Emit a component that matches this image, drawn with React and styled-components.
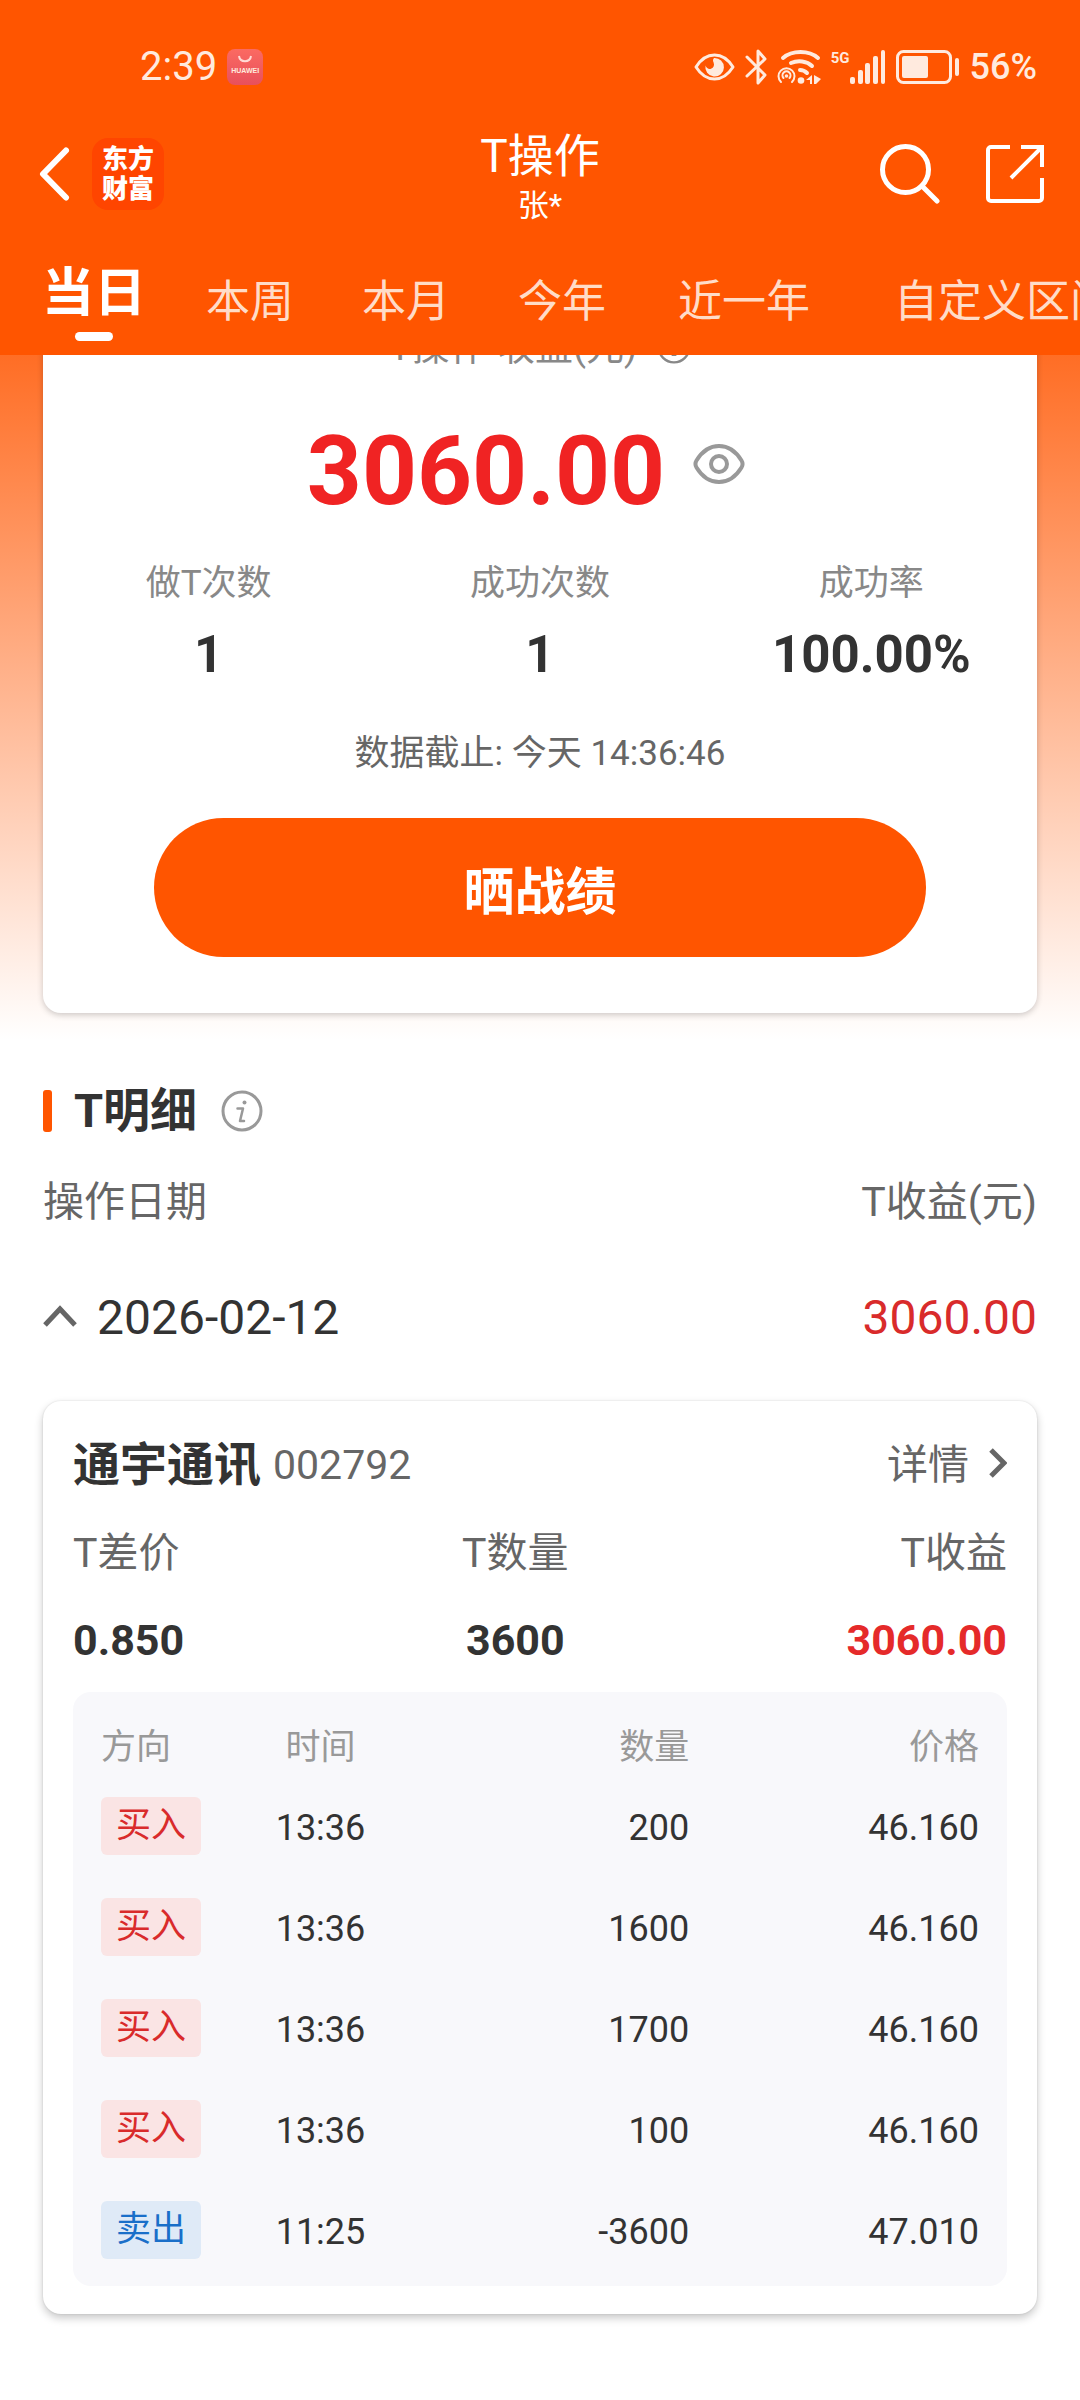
import { useState } from "react";
import styled, { createGlobalStyle } from "styled-components";

const TABS = ["当日", "本周", "本月", "今年", "近一年", "自定义区间"];

const STATS = [
  { label: "做T次数", value: "1" },
  { label: "成功次数", value: "1" },
  { label: "成功率", value: "100.00%" },
];

const TRADES = [
  { id: 1, side: "buy", time: "13:36", amount: "200", price: "46.160" },
  { id: 2, side: "buy", time: "13:36", amount: "1600", price: "46.160" },
  { id: 3, side: "buy", time: "13:36", amount: "1700", price: "46.160" },
  { id: 4, side: "buy", time: "13:36", amount: "100", price: "46.160" },
  { id: 5, side: "sell", time: "11:25", amount: "-3600", price: "47.010" },
];

// ICONS
const EyeComfortIcon = () => (
  <svg width="41" height="28" viewBox="0 0 41 28" fill="none">
    <path
      d="M2 14C7 6 13 2 20.500 2S34 6 39 14C34 22 28 26 20.500 26S7 22 2 14Z"
      stroke="currentColor"
      strokeWidth="3"
      strokeLinejoin="round"
    />
    <path
      d="M20 5a9.300 9.300 0 1 1-8.500 7.500c1 3 3.500 4 5.500 3.200 2.800-1 3.600-3.600 2.600-6.200C19 8 18.500 6.500 20 5Z"
      fill="currentColor"
    />
  </svg>
);

const BluetoothIcon = () => (
  <svg width="22" height="38" viewBox="1 0 22 38" fill="none">
    <path
      d="M3 9l18 18-7 8V3l7 8L3 28"
      stroke="currentColor"
      strokeWidth="3"
      strokeLinecap="round"
      strokeLinejoin="round"
    />
  </svg>
);

const WifiIcon = () => (
  <svg width="44" height="34" viewBox="0 0 44 34" fill="none">
    <g stroke="currentColor" strokeLinecap="round">
      <path d="M6 8C15 0 32 0 41 8" strokeWidth="4" />
      <path d="M14 13c7-3 16-2 21 3" strokeWidth="4" />
      <path d="M23 20c3 0 5 1 7 3" strokeWidth="4" />
      <path d="M4 32a8 8 0 1 1 11 0" strokeWidth="2" />
      <path d="M6.500 28a4 4 0 1 1 6 0" strokeWidth="2" />
    </g>
    <circle cx="9.500" cy="26" r="1.800" fill="currentColor" />
    <circle cx="24" cy="30.500" r="3.300" fill="currentColor" />
    <path d="M29 30l6-5v9h-2v-4zM37 25l7 4-5 5h-2z" fill="currentColor" />
  </svg>
);

const SignalIcon = () => (
  <svg width="36" height="34" viewBox="0 0 36 34" fill="currentColor">
    <rect x="0" y="27" width="5" height="7" rx="2" />
    <rect x="8" y="20" width="5" height="14" rx="2" />
    <rect x="15" y="13" width="5" height="21" rx="2" />
    <rect x="23" y="6" width="5" height="28" rx="2" />
    <rect x="31" y="0" width="4" height="34" rx="2" />
  </svg>
);

const BatteryIcon = () => (
  <svg width="64" height="34" viewBox="0 0 64 34" fill="none">
    <rect x="1.500" y="1.500" width="53" height="31" rx="6" stroke="currentColor" strokeWidth="3" />
    <rect x="6" y="6" width="26" height="22" rx="2" fill="currentColor" />
    <rect x="59" y="8" width="4" height="18" rx="2" fill="currentColor" />
  </svg>
);

const BackIcon = () => (
  <svg width="34" height="54" viewBox="0 0 34 54" fill="none">
    <path
      d="M30 3.500L7 27l23 23.500"
      stroke="currentColor"
      strokeWidth="6"
      strokeLinecap="round"
      strokeLinejoin="round"
    />
  </svg>
);

const SearchIcon = () => (
  <svg width="60" height="60" viewBox="0 0 60 60" fill="none" stroke="currentColor" strokeWidth="5">
    <circle cx="25.500" cy="25.500" r="23" />
    <path d="M42 42l15 15" strokeLinecap="round" />
  </svg>
);

const ShareIcon = () => (
  <svg width="58" height="58" viewBox="0 0 58 58" fill="none" stroke="currentColor" strokeWidth="4">
    <path d="M24 2H5a3 3 0 0 0-3 3v48a3 3 0 0 0 3 3h48a3 3 0 0 0 3-3V33" />
    <path d="M35 2h21v20M56 2L25 33" />
  </svg>
);

const EyeIcon = () => (
  <svg width="52" height="40" viewBox="0 0 52 40" fill="none" stroke="currentColor" strokeWidth="4">
    <path
      d="M3.500 16.500C9 7.500 17 2 26 2s17 5.500 22.500 14.500c1.500 2.500 1.500 4.500 0 7C43 32.500 35 38 26 38S9 32.500 3.500 23.500c-1.500-2.500-1.500-4.500 0-7Z"
      strokeLinejoin="round"
    />
    <circle cx="26" cy="20" r="8" />
  </svg>
);

const InfoIcon = ({ size = 42 }) => (
  <svg width={size} height={size} viewBox="0 0 42 42" fill="none" stroke="currentColor">
    <circle cx="21" cy="21" r="19" strokeWidth="3" />
    <path
      d="M16.500 18.500h5.500l-3 12.500h4"
      strokeWidth="2.500"
      strokeLinecap="round"
      strokeLinejoin="round"
    />
    <circle cx="23.500" cy="12.500" r="2" fill="currentColor" stroke="none" />
  </svg>
);

const CaretIcon = () => (
  <svg width="34" height="26" viewBox="0 0 34 26" fill="none">
    <path d="M2 20L17 4l15 16" stroke="#666" strokeWidth="5" />
  </svg>
);

const ChevronRightIcon = () => (
  <svg width="18" height="34" viewBox="0 0 18 34" fill="none">
    <path d="M2 2l13 13L2 28" stroke="#666" strokeWidth="5" />
  </svg>
);

const App = () => {
  const [activeTab, setActiveTab] = useState(TABS[0]);
  const [open, setOpen] = useState(true);

  return (
    <Page>
      <GlobalStyle />
      <Header>
        <StatusBar>
          <Clock>2:39</Clock>
          <StoreBadge>
            <svg width="14" height="8" viewBox="0 0 14 8" fill="none">
              <path d="M1 1c1 7 11 7 12 0" stroke="#ffd9d4" strokeWidth="2" />
            </svg>
            HUAWEI
          </StoreBadge>
          <StatusIcons>
            <EyeComfortIcon />
            <BluetoothIcon />
            <WifiIcon />
            <Signal>
              <NetworkType>5G</NetworkType>
              <SignalIcon />
            </Signal>
            <BatteryIcon />
            <Percent>56%</Percent>
          </StatusIcons>
        </StatusBar>

        <NavBar>
          <NavSide>
            <IconButton aria-label="返回">
              <BackIcon />
            </IconButton>
            <Logo>
              <span>东方</span>
              <span>财富</span>
            </Logo>
          </NavSide>
          <TitleBlock>
            <Title>T操作</Title>
            <Account>张*</Account>
          </TitleBlock>
          <NavActions>
            <IconButton aria-label="搜索">
              <SearchIcon />
            </IconButton>
            <IconButton aria-label="分享">
              <ShareIcon />
            </IconButton>
          </NavActions>
        </NavBar>

        <TabList>
          {TABS.map((tab) => (
            <Tab
              key={tab}
              data-label={tab}
              $active={tab === activeTab}
              onClick={() => setActiveTab(tab)}
            >
              {tab}
            </Tab>
          ))}
        </TabList>
      </Header>

      <Summary>
        <SummaryCard>
          <Caption>
            T操作 收益(元)
            <InfoIcon size={34} />
          </Caption>
          <ProfitRow>
            <Profit>3060.00</Profit>
            <EyeButton aria-label="隐藏金额">
              <EyeIcon />
            </EyeButton>
          </ProfitRow>
          <Stats>
            {STATS.map((stat) => (
              <Stat key={stat.label}>
                <StatLabel>{stat.label}</StatLabel>
                <StatValue>{stat.value}</StatValue>
              </Stat>
            ))}
          </Stats>
          <Deadline>数据截止: 今天 14:36:46</Deadline>
          <ShowButton>晒战绩</ShowButton>
        </SummaryCard>
      </Summary>

      <Details>
        <SectionTitle>
          <h2>T明细</h2>
          <InfoIcon />
        </SectionTitle>
        <ListHead>
          <span>操作日期</span>
          <span>T收益(元)</span>
        </ListHead>
        <DateRow aria-expanded={open} onClick={() => setOpen(!open)}>
          <CaretIcon />
          <span>2026-02-12</span>
          <DateProfit>3060.00</DateProfit>
        </DateRow>

        {open && (
          <StockCard>
            <StockHead>
              <StockName>通宇通讯</StockName>
              <StockCode>002792</StockCode>
              <DetailLink href="#detail">
                详情
                <ChevronRightIcon />
              </DetailLink>
            </StockHead>
            <Metrics>
              <Metric $align="left">
                <dt>T差价</dt>
                <dd>0.850</dd>
              </Metric>
              <Metric $align="center">
                <dt>T数量</dt>
                <dd>3600</dd>
              </Metric>
              <Metric $align="right" $color="#e52a2a">
                <dt>T收益</dt>
                <dd>3060.00</dd>
              </Metric>
            </Metrics>
            <TradePanel>
              <TradeTable>
                <thead>
                  <tr>
                    <th scope="col">方向</th>
                    <th scope="col">时间</th>
                    <th scope="col">数量</th>
                    <th scope="col">价格</th>
                  </tr>
                </thead>
                <tbody>
                  {TRADES.map((trade) => (
                    <tr key={trade.id}>
                      <td>
                        <SideTag $side={trade.side}>
                          {trade.side === "buy" ? "买入" : "卖出"}
                        </SideTag>
                      </td>
                      <td>{trade.time}</td>
                      <td>{trade.amount}</td>
                      <td>{trade.price}</td>
                    </tr>
                  ))}
                </tbody>
              </TradeTable>
            </TradePanel>
          </StockCard>
        )}
      </Details>
    </Page>
  );
};

export default App;

// STYLED COMPONENTS
const GlobalStyle = createGlobalStyle`
  * {
    box-sizing: border-box;
  }

  body {
    margin: 0;
    background: #fff;
    color: #333;
    font-family: Roboto, "Noto Sans CJK SC", sans-serif;
  }

  h1, h2, h3, p, dl, dd {
    margin: 0;
  }

  button {
    padding: 0;
    border: 0;
    background: none;
    color: inherit;
    font-family: inherit;
    cursor: pointer;
  }

  svg {
    display: block;
    flex-shrink: 0;
  }
`;

const Page = styled.div`
  min-height: 100vh;
`;

const Header = styled.header`
  position: sticky;
  top: 0;
  z-index: 1;
  background: #ff5500;
  color: #fff;
`;

const StatusBar = styled.div`
  display: flex;
  align-items: center;
  height: 92px;
  padding: 42px 43px 0 140px;
  color: #ffeade;
`;

const Clock = styled.span`
  font-size: 40px;
  line-height: 50px;
`;

const StoreBadge = styled.span`
  display: flex;
  flex-direction: column;
  align-items: center;
  gap: 3px;
  width: 36px;
  height: 36px;
  margin-left: 10px;
  padding-top: 6px;
  border-radius: 8px;
  background: linear-gradient(#fb6a62, #e8505c);
  font-family: "Liberation Sans", sans-serif;
  font-size: 7px;
  font-weight: 700;
  line-height: 10px;
`;

const StatusIcons = styled.div`
  display: flex;
  align-items: center;
  gap: 10px;
  margin-left: auto;
`;

const Signal = styled.span`
  display: flex;
`;

const NetworkType = styled.span`
  font-size: 15px;
  font-weight: 700;
  line-height: 16px;
`;

const Percent = styled.span`
  font-size: 36px;
  font-weight: 500;
  line-height: 50px;
`;

const NavBar = styled.div`
  display: grid;
  grid-template-columns: 1fr auto 1fr;
  align-items: center;
  height: 164px;
  padding: 0 36px;
`;

const NavSide = styled.div`
  display: flex;
  align-items: center;
  gap: 22px;
`;

const NavActions = styled(NavSide)`
  justify-content: flex-end;
  gap: 46px;
`;

const IconButton = styled.button`
  color: #fff;
`;

const Logo = styled.span`
  display: flex;
  flex-direction: column;
  align-items: center;
  justify-content: center;
  width: 72px;
  height: 72px;
  border-radius: 16px;
  background: #ff4500;
  font-size: 26px;
  font-weight: 900;
  line-height: 30px;
`;

const TitleBlock = styled.div`
  padding-top: 4px;
  text-align: center;
`;

const Title = styled.h1`
  font-size: 46px;
  font-weight: 400;
  line-height: 60px;
`;

const Account = styled.p`
  font-size: 31px;
  line-height: 40px;
`;

const TabList = styled.nav`
  display: flex;
  gap: 52px;
  height: 99px;
  padding-left: 42px;
  overflow: hidden;
`;

const Tab = styled.button`
  display: flex;
  flex-direction: column;
  flex-shrink: 0;
  align-items: center;
  padding-top: ${({ $active }) => ($active ? "0" : "8px")};
  color: ${({ $active }) => ($active ? "#fff" : "#ffdcc8")};
  font-size: ${({ $active }) => ($active ? "52px" : "44px")};
  font-weight: ${({ $active }) => ($active ? "700" : "400")};
  line-height: 76px;
  white-space: nowrap;

  &::before {
    content: "";
    order: 1;
    width: 38px;
    height: 9px;
    border-radius: 5px;
    background: ${({ $active }) => ($active ? "#fff" : "transparent")};
  }

  /* keeps the tab as wide as its bold label */
  &::after {
    content: attr(data-label);
    order: 2;
    height: 0;
    overflow: hidden;
    visibility: hidden;
    font-size: 52px;
    font-weight: 700;
  }
`;

const Summary = styled.section`
  margin-top: -75px;
  padding: 20px 43px 28px;
  background: linear-gradient(#ff5500 -40px, #fff 760px);
`;

const Card = styled.div`
  border-radius: 18px;
  background: #fff;
`;

const SummaryCard = styled(Card)`
  display: flex;
  flex-direction: column;
  align-items: center;
  padding: 25px 0 56px;
  box-shadow: 0 2px 6px rgba(0, 0, 0, 0.2);
`;

const Caption = styled.p`
  display: flex;
  align-items: center;
  gap: 20px;
  color: #888;
  font-size: 38px;
  line-height: 44px;
`;

const ProfitRow = styled.div`
  display: flex;
  align-items: center;
  margin-top: 52px;
`;

const Profit = styled.strong`
  color: #f02323;
  font-size: 96px;
  font-weight: 700;
  line-height: 100px;
`;

const EyeButton = styled.button`
  padding: 0 28px 14px;
  color: #999;
`;

const Stats = styled.dl`
  display: grid;
  grid-template-columns: repeat(3, 1fr);
  width: 100%;
  margin-top: 41px;
  text-align: center;
`;

const Stat = styled.div`
  display: flex;
  flex-direction: column;
  gap: 19px;
`;

const StatLabel = styled.dt`
  color: #888;
  font-size: 35px;
  line-height: 44px;
`;

const StatValue = styled.dd`
  font-size: 51px;
  font-weight: 700;
  line-height: 60px;
`;

const Deadline = styled.p`
  margin-top: 47px;
  color: #666;
  font-size: 35px;
  line-height: 44px;
`;

const ShowButton = styled.button`
  align-self: stretch;
  height: 139px;
  margin: 42px 111px 0;
  border-radius: 70px;
  background: #ff5500;
  color: #fff;
  font-size: 51px;
  font-weight: 700;
`;

const Details = styled.section`
  padding: 40px 43px 86px;
`;

const SectionTitle = styled.div`
  display: flex;
  align-items: center;
  color: #999;

  &::before {
    content: "";
    width: 9px;
    height: 42px;
    margin-right: 22px;
    border-radius: 3px;
    background: #ff5500;
  }

  h2 {
    margin-right: 24px;
    color: #333;
    font-size: 47px;
    font-weight: 700;
    line-height: 60px;
  }
`;

const ListHead = styled.div`
  display: flex;
  justify-content: space-between;
  margin-top: 36px;
  color: #666;
  font-size: 41px;
  line-height: 50px;
`;

const DateRow = styled.button`
  display: flex;
  align-items: center;
  gap: 20px;
  width: 100%;
  margin-top: 61px;
  font-size: 48px;
  line-height: 60px;
`;

const DateProfit = styled.span`
  margin-left: auto;
  color: #d92b2b;
`;

const StockCard = styled(Card)`
  margin-top: 53px;
  padding: 34px 30px 28px;
  box-shadow: 0 4px 8px rgba(0, 0, 0, 0.22), 0 0 2px rgba(0, 0, 0, 0.12);
`;

const StockHead = styled.div`
  display: flex;
  align-items: center;
  color: #666;
  font-size: 41px;
  line-height: 60px;
`;

const StockName = styled.h3`
  color: #333;
  font-size: 47px;
  font-weight: 700;
`;

const StockCode = styled.span`
  margin-left: 12px;
`;

const DetailLink = styled.a`
  display: flex;
  align-items: center;
  gap: 20px;
  margin-left: auto;
  color: inherit;
  text-decoration: none;
`;

const Metrics = styled.dl`
  display: flex;
  justify-content: space-between;
  margin-top: 33px;
`;

const Metric = styled.div`
  display: flex;
  flex-direction: column;
  gap: 37px;
  line-height: 50px;
  text-align: ${({ $align }) => $align};

  dt {
    color: #666;
    font-size: 41px;
  }

  dd {
    color: ${({ $color }) => $color || "#333"};
    font-size: 43px;
    font-weight: 700;
  }
`;

const TradePanel = styled.div`
  margin-top: 27px;
  padding: 25px 28px 6px;
  border-radius: 18px;
  background: #f8f8fb;
`;

const TradeTable = styled.table`
  width: 100%;
  table-layout: fixed;
  border-collapse: collapse;
  font-size: 36px;
  line-height: 44px;
  text-align: right;

  th {
    height: 58px;
    padding: 4px 0 0;
    color: #999;
    font-size: 35px;
    font-weight: 400;
    text-align: inherit;
  }

  td {
    height: 101px;
    padding: 4px 0 0;
  }

  td:nth-child(1) {
    padding-top: 0;
  }

  th:nth-child(1),
  td:nth-child(1) {
    width: 16%;
    text-align: left;
  }

  th:nth-child(2),
  td:nth-child(2) {
    width: 18%;
    text-align: center;
  }

  th:nth-child(3) {
    width: 33%;
  }
`;

const SideTag = styled.span`
  display: inline-block;
  padding: 0 15px;
  border-radius: 6px;
  background: ${({ $side }) => ($side === "buy" ? "#fae4e4" : "#dfeaf7")};
  color: ${({ $side }) => ($side === "buy" ? "#d92b2b" : "#1a6fc9")};
  font-size: 35px;
  line-height: 58px;
  vertical-align: middle;
`;
